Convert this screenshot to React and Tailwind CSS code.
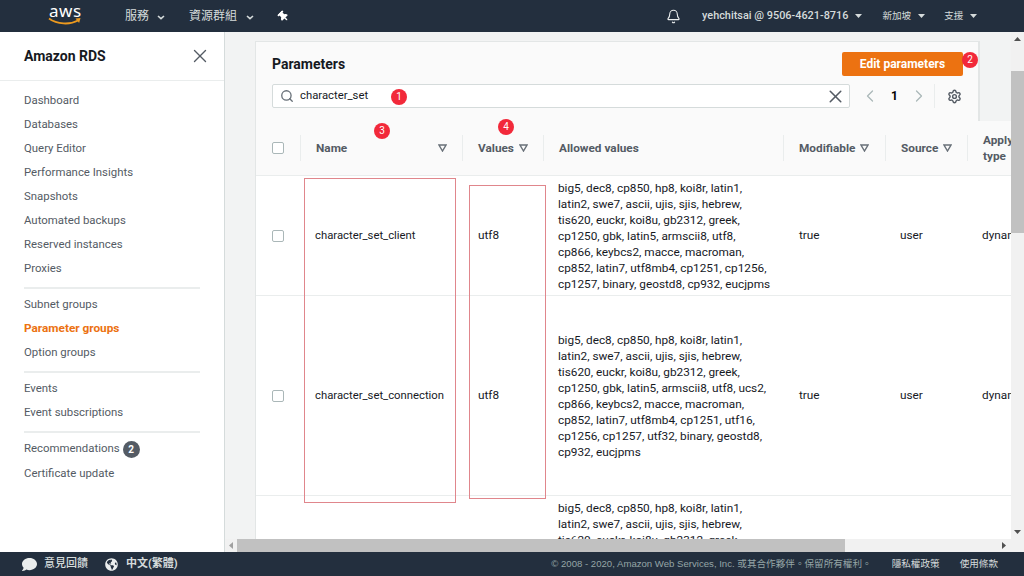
import React from 'react';
import { Bell, ChevronLeft, ChevronRight, Search, Settings, X } from 'lucide-react';
import { FaComment, FaGlobeAmericas, FaThumbtack } from 'react-icons/fa';

const navGroups = [
  ['Dashboard', 'Databases', 'Query Editor', 'Performance Insights', 'Snapshots', 'Automated backups', 'Reserved instances', 'Proxies'],
  ['Subnet groups', 'Parameter groups', 'Option groups'],
  ['Events', 'Event subscriptions'],
];

const rows = [
  {
    name: 'character_set_client',
    height: 'h-[120px]',
    lines: [
      'big5, dec8, cp850, hp8, koi8r, latin1,',
      'latin2, swe7, ascii, ujis, sjis, hebrew,',
      'tis620, euckr, koi8u, gb2312, greek,',
      'cp1250, gbk, latin5, armscii8, utf8,',
      'cp866, keybcs2, macce, macroman,',
      'cp852, latin7, utf8mb4, cp1251, cp1256,',
      'cp1257, binary, geostd8, cp932, eucjpms',
    ],
  },
  {
    name: 'character_set_connection',
    height: 'h-[200px]',
    lines: [
      'big5, dec8, cp850, hp8, koi8r, latin1,',
      'latin2, swe7, ascii, ujis, sjis, hebrew,',
      'tis620, euckr, koi8u, gb2312, greek,',
      'cp1250, gbk, latin5, armscii8, utf8, ucs2,',
      'cp866, keybcs2, macce, macroman,',
      'cp852, latin7, utf8mb4, cp1251, utf16,',
      'cp1256, cp1257, utf32, binary, geostd8,',
      'cp932, eucjpms',
    ],
  },
  {
    name: 'character_set_database',
    height: 'h-[136px]',
    lines: [
      'big5, dec8, cp850, hp8, koi8r, latin1,',
      'latin2, swe7, ascii, ujis, sjis, hebrew,',
      'tis620, euckr, koi8u, gb2312, greek,',
      'cp1250, gbk, latin5, armscii8, utf8, ucs2,',
      'cp866, keybcs2, macce, macroman,',
      'cp852, latin7, utf8mb4, cp1251, utf16,',
      'cp1256, cp1257, utf32, binary, geostd8,',
      'cp932, eucjpms',
    ],
  },
];

const gridCols = 'grid grid-cols-[44px_162px_81px_240px_102px_82px_100px]';

const Caret = ({ className }) => (
  <svg className={className} width="7" height="4" viewBox="0 0 7 4" fill="currentColor">
    <path d="M0 0h7L3.5 4z" />
  </svg>
);

const SmallChevron = ({ className }) => (
  <svg className={className} width="8" height="5" viewBox="0 0 8 5" fill="none" stroke="currentColor" strokeWidth="1.6">
    <path d="M1 1l3 2.6L7 1" />
  </svg>
);

const SortIcon = ({ className }) => (
  <svg className={`shrink-0 ${className}`} width="9" height="8" viewBox="0 0 9 8" fill="none" stroke="#687078" strokeWidth="1.4">
    <path d="M1 1h7L4.5 7z" />
  </svg>
);

const Checkbox = () => (
  <div className="w-[12px] h-[12px] rounded-[2px] border border-[#aab7b8] bg-white" />
);

const Badge = ({ n, className }) => (
  <div className={`absolute w-[16px] h-[16px] rounded-full bg-[#f2293a] text-white text-[10px] leading-[16px] text-center ${className}`}>
    {n}
  </div>
);

const Header = () => (
  <header className="h-[32px] shrink-0 bg-[#232f3e] flex items-center text-[11px] text-[#d5dbdb]">
    <div className="ml-[48px] w-[34px] relative h-[32px]">
      <span className="absolute left-[1px] top-[1px] text-[17px] leading-[20px] text-white tracking-[0.5px] font-['Noto_Sans',sans-serif]">aws</span>
      <svg className="absolute left-0 top-[17px]" width="34" height="9" viewBox="0 0 34 9" fill="none">
        <path d="M1 1.5C9 7.5 22 8 30 3.5" stroke="#ec9a1f" strokeWidth="1.8" />
        <path d="M27.5 1.6l5 -0.6l-1.4 5z" fill="#ec9a1f" />
      </svg>
    </div>
    <span className="ml-[43px] text-[12px]">服務</span>
    <SmallChevron className="ml-[8px] mt-[3px]" />
    <span className="ml-[24px] text-[12px]">資源群組</span>
    <SmallChevron className="ml-[9px] mt-[3px]" />
    <FaThumbtack className="ml-[24px] text-white -rotate-45" size={11} />
    <Bell className="ml-[377px] text-[#eaeded]" size={15} strokeWidth={1.75} />
    <span className="ml-[21px] text-[10.9px] font-medium whitespace-nowrap">yehchitsai @ 9506-4621-8716</span>
    <Caret className="ml-[7px]" />
    <span className="ml-[20px] text-[9.6px]">新加坡</span>
    <Caret className="ml-[7px]" />
    <span className="ml-[19px] text-[9.6px]">支援</span>
    <Caret className="ml-[7px]" />
  </header>
);

const Sidebar = () => (
  <aside className="w-[225px] shrink-0 bg-white border-r border-[#d5dbdb] text-[11.4px] text-[#545b64]">
    <div className="h-[49px] border-b border-[#eaeded] pl-[24px] pr-[13px] flex items-center justify-between">
      <span className="text-[14px] font-bold text-[#16191f]">Amazon RDS</span>
      <X size={22} className="text-[#545b64]" strokeWidth={1.5} />
    </div>
    <nav className="px-[24px] pt-[8px]">
      {navGroups.map((group, i) => (
        <div key={i} className="border-b-2 border-[#eaeded] pb-[6px] mb-[4px] w-[176px]">
          {group.map((item) => (
            <div
              key={item}
              className={`h-[24px] flex items-center whitespace-nowrap ${item === 'Parameter groups' ? 'font-bold text-[#ec7211] text-[11.8px]' : ''}`}
            >
              {item}
            </div>
          ))}
        </div>
      ))}
      <div className="h-[24px] flex items-center whitespace-nowrap">
        Recommendations
        <span className="ml-[3px] w-[17px] h-[17px] rounded-full bg-[#545b64] text-white text-[10px] font-bold flex items-center justify-center">2</span>
      </div>
      <div className="h-[24px] mt-[1px] flex items-center whitespace-nowrap">Certificate update</div>
    </nav>
  </aside>
);

const HeaderCell = ({ label, sort, spread }) => (
  <div className="flex items-center h-[26px] px-[15px] border-l border-[#eaeded] whitespace-nowrap">
    <span className="font-bold text-[#545b64] pt-[1px]">{label}</span>
    {sort && <SortIcon className={spread ? 'ml-auto' : 'ml-[5px]'} />}
  </div>
);

const ParamTable = () => (
  <div className="w-[756px] text-[11.8px] text-[#16191f] bg-white">
    <div className={`${gridCols} h-[55px] items-center bg-[#fafafa] border-b border-[#eaeded]`}>
      <div className="pl-[16px]"><Checkbox /></div>
      <HeaderCell label="Name" sort spread />
      <HeaderCell label="Values" sort />
      <HeaderCell label="Allowed values" />
      <HeaderCell label="Modifiable" sort />
      <HeaderCell label="Source" sort />
      <div className="flex items-center h-[26px] px-[15px] border-l border-[#eaeded]">
        <span className="font-bold text-[#545b64] leading-[16px]">Apply<br />type</span>
      </div>
    </div>
    {rows.map((row) => (
      <div key={row.name} className={`${gridCols} ${row.height} items-center border-b border-[#eaeded]`}>
        <div className="pl-[16px]"><Checkbox /></div>
        <div className="pl-[15px] pt-[2px] whitespace-nowrap text-[11.3px]">{row.name}</div>
        <div className="pl-[16px]">utf8</div>
        <div className="pl-[15px] leading-[16px] whitespace-nowrap">
          {row.lines.map((line) => (
            <div key={line}>{line}</div>
          ))}
        </div>
        <div className="pl-[16px]">true</div>
        <div className="pl-[15px]">user</div>
        <div className="pl-[15px]">dynamic</div>
      </div>
    ))}
  </div>
);

const Main = () => (
  <main className="flex-1 min-w-0 flex flex-col bg-[#f2f3f3]">
    <div className="flex-1 min-h-0 flex">
      <div className="relative flex-1 min-w-0 overflow-hidden pl-[30px] pt-[9px]">
        <div className="w-[725px] h-[80px] bg-[#fafafa] border-l border-t border-r-2 border-[#e3e6e6] px-[16px] pt-[10px]">
          <div className="flex items-start justify-between h-[32px]">
            <h2 className="text-[14px] font-bold text-[#16191f] leading-[24px]">Parameters</h2>
            <button className="w-[121px] h-[24px] rounded-[2px] bg-[#ec7211] text-white text-[12px] font-bold mr-[-1px]">Edit parameters</button>
          </div>
          <div className="flex items-center">
            <div className="w-[578px] h-[24px] bg-white border border-[#d5dbdb] rounded-[2px] flex items-center pl-[7px] pr-[3px] text-[11.3px] text-[#16191f]">
              <Search size={14} className="text-[#687078]" strokeWidth={2.25} />
              <span className="ml-[6px] pt-[1px]">character_set</span>
              <X size={21} className="ml-auto text-[#545b64]" strokeWidth={1.75} />
            </div>
            <ChevronLeft size={20} className="ml-[10px] text-[#aab7b8]" strokeWidth={1.5} />
            <span className="ml-[11px] text-[12px] font-bold">1</span>
            <ChevronRight size={20} className="ml-[11px] text-[#aab7b8]" strokeWidth={1.5} />
            <div className="ml-[5px] h-[24px] border-l border-[#eaeded]" />
            <Settings size={15} className="ml-[12px] text-[#545b64]" strokeWidth={2.25} />
          </div>
        </div>
        <div className="border-l border-[#e3e6e6]">
          <ParamTable />
        </div>
        <Badge n="1" className="left-[166px] top-[57px]" />
        <Badge n="2" className="left-[737px] top-[20px]" />
        <Badge n="3" className="left-[149px] top-[91px]" />
        <Badge n="4" className="left-[273px] top-[87px]" />
        <div className="absolute left-[79px] top-[146px] w-[152px] h-[325px] border border-[#e0868c]" />
        <div className="absolute left-[244px] top-[153px] w-[77px] h-[314px] border border-[#e0868c]" />
      </div>
      <div className="w-[13px] shrink-0 bg-[#f1f1f1] flex flex-col items-center pt-[5px] pb-[5px] text-[#505050]">
        <svg width="7" height="4" viewBox="0 0 7 4" fill="currentColor"><path d="M0 4h7L3.5 0z" /></svg>
        <div className="w-full h-[162px] mt-[30px] bg-[#c1c1c1]" />
        <Caret className="mt-auto" />
      </div>
    </div>
    <div className="h-[13px] shrink-0 bg-[#f1f1f1] flex items-center pl-[4px] text-[#a0a0a0]">
      <svg width="4" height="7" viewBox="0 0 4 7" fill="currentColor"><path d="M4 0v7L0 3.5z" /></svg>
      <div className="ml-[4px] w-[608px] h-full bg-[#c1c1c1]" />
      <svg className="ml-[157px] text-[#505050]" width="4" height="7" viewBox="0 0 4 7" fill="currentColor"><path d="M0 0v7l4-3.5z" /></svg>
    </div>
  </main>
);

const Footer = () => (
  <footer className="h-[24px] shrink-0 bg-[#232f3e] flex items-center text-[11px] text-[#d5dbdb]">
    <FaComment size={15} className="ml-[22px] text-[#eaeded]" />
    <span className="ml-[7px] font-medium">意見回饋</span>
    <FaGlobeAmericas size={13} className="ml-[17px] text-[#eaeded]" />
    <span className="ml-[8px] font-bold">中文(繁體)</span>
    <span className="ml-auto text-[9.6px] text-[#95a5a6] whitespace-nowrap font-['Liberation_Sans','Noto_Sans_CJK_TC',sans-serif]">© 2008 - 2020, Amazon Web Services, Inc. 或其合作夥伴。保留所有權利。</span>
    <span className="ml-[20px] text-[9.6px]">隱私權政策</span>
    <span className="ml-[20px] mr-[26px] text-[9.6px]">使用條款</span>
  </footer>
);

const App = () => (
  <div className="w-[1024px] h-[576px] overflow-hidden flex flex-col font-['Roboto','Noto_Sans_CJK_TC',sans-serif]">
    <Header />
    <div className="flex-1 min-h-0 flex">
      <Sidebar />
      <Main />
    </div>
    <Footer />
  </div>
);

export default App;
